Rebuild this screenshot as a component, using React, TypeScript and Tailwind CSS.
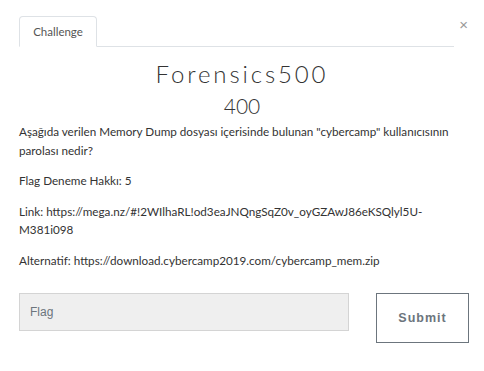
import React from "react";

export default function App() {
  return (
    <div className="w-[484px] h-[371px] bg-white relative overflow-hidden" style={{ fontFamily: "Lato, 'Open Sans', sans-serif" }}>
      <div className="flex items-start pt-[16px] pl-[19px] pr-[16px]">
        <div className="flex-1 border-b border-[#dee2e6] flex">
          <div className="w-[78px] h-[31px] -mb-px border border-[#dee2e6] border-b-white rounded-t-[4px] bg-white flex items-center justify-center text-[11.5px] text-[#555]">
            Challenge
          </div>
        </div>
        <div className="w-[12px] ml-[2px] mt-[1px] text-[#999] text-[15px] leading-[16px] text-right" style={{ fontFamily: "'Liberation Sans', sans-serif" }}>
          ×
        </div>
      </div>
      <div className="text-center text-[#333] text-[24px] leading-[28px] font-light tracking-[0.12em] mt-[13px]" style={{ fontFamily: "Lato, sans-serif" }}>
        Forensics500
      </div>
      <div className="text-center text-[#333] text-[21px] leading-[24px] font-light mt-[6px]" style={{ fontFamily: "Lato, sans-serif" }}>
        400
      </div>
      <div className="px-[19px] mt-[4px] text-[11.7px] leading-[18.5px] text-[#333]">
        <p className="mb-[12px]">
          Aşağıda verilen Memory Dump dosyası içerisinde bulunan "cybercamp" kullanıcısının parolası nedir?
        </p>
        <p className="mb-[12px]">Flag Deneme Hakkı: 5</p>
        <p className="mb-[12px]">
          Link: https://mega.nz/#!2WIlhaRL!od3eaJNQngSqZ0v_oyGZAwJ86eKSQlyl5U-M381i098
        </p>
        <p>Alternatif: https://download.cybercamp2019.com/cybercamp_mem.zip</p>
      </div>
      <div className="flex items-start px-[19px] mt-[24px]">
        <div className="shrink-0 w-[330px] h-[38px] bg-[#efefef] border border-[#d4d4d4] flex items-center pl-[10px] text-[12px] text-[#6c757d]" style={{ fontFamily: "'Liberation Sans', sans-serif" }}>
          Flag
        </div>
        <div className="shrink-0 ml-[27px] w-[93px] h-[50px] border border-[#6c757d] flex items-center justify-center text-[12.5px] font-bold tracking-[0.08em] text-[#6c757d]" style={{ fontFamily: "'Liberation Sans', sans-serif" }}>
          Submit
        </div>
      </div>
    </div>
  );
}
